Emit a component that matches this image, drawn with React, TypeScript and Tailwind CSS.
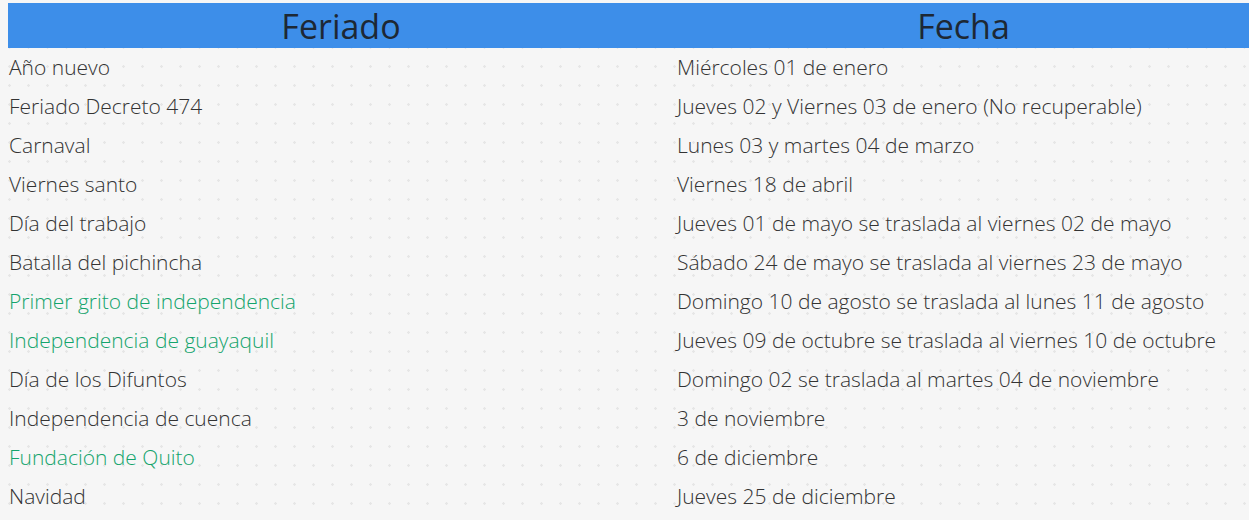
import React from "react";

const rows: { name: string; date: string; green?: boolean }[] = [
  { name: "Año nuevo", date: "Miércoles 01 de enero" },
  { name: "Feriado Decreto 474", date: "Jueves 02 y Viernes 03 de enero (No recuperable)" },
  { name: "Carnaval", date: "Lunes 03 y martes 04 de marzo" },
  { name: "Viernes santo", date: "Viernes 18 de abril" },
  { name: "Día del trabajo", date: "Jueves 01 de mayo se traslada al viernes 02 de mayo" },
  { name: "Batalla del pichincha", date: "Sábado 24 de mayo se traslada al viernes 23 de mayo" },
  { name: "Primer grito de independencia", date: "Domingo 10 de agosto se traslada al lunes 11 de agosto", green: true },
  { name: "Independencia de guayaquil", date: "Jueves 09 de octubre se traslada al viernes 10 de octubre", green: true },
  { name: "Día de los Difuntos", date: "Domingo 02 se traslada al martes 04 de noviembre" },
  { name: "Independencia de cuenca", date: "3 de noviembre" },
  { name: "Fundación de Quito", date: "6 de diciembre", green: true },
  { name: "Navidad", date: "Jueves 25 de diciembre" },
];

export default function App() {
  return (
    <div
      className="w-[1249px] h-[520px] overflow-hidden bg-[#f6f6f6] bg-[radial-gradient(circle,#e6e6e6_1px,transparent_1.5px)] bg-[size:19px_19px] pt-[3px] pl-[8px]"
      style={{ fontFamily: '"Open Sans", "Noto Sans", sans-serif' }}
    >
      <div className="grid grid-cols-[666px_1fr]">
        <div className="h-[45px] bg-[#3d8ee9] flex items-center justify-center text-[34px] text-[#1d2834] leading-none">
          Feriado
        </div>
        <div className="h-[45px] bg-[#3d8ee9] flex items-center justify-center pl-[4px] text-[34px] text-[#1d2834] leading-none">
          Fecha
        </div>
        {rows.map((r, i) => (
          <React.Fragment key={i}>
            <div
              className={`h-[39px] flex items-center pt-[1px] pl-[1px] text-[21px] font-light ${
                r.green ? "text-[#14a46c]" : "text-[#333333]"
              }`}
            >
              {r.name}
            </div>
            <div className="h-[39px] flex items-center pt-[1px] pl-[3px] text-[21px] font-light text-[#333333] whitespace-nowrap">
              {r.date}
            </div>
          </React.Fragment>
        ))}
      </div>
    </div>
  );
}
